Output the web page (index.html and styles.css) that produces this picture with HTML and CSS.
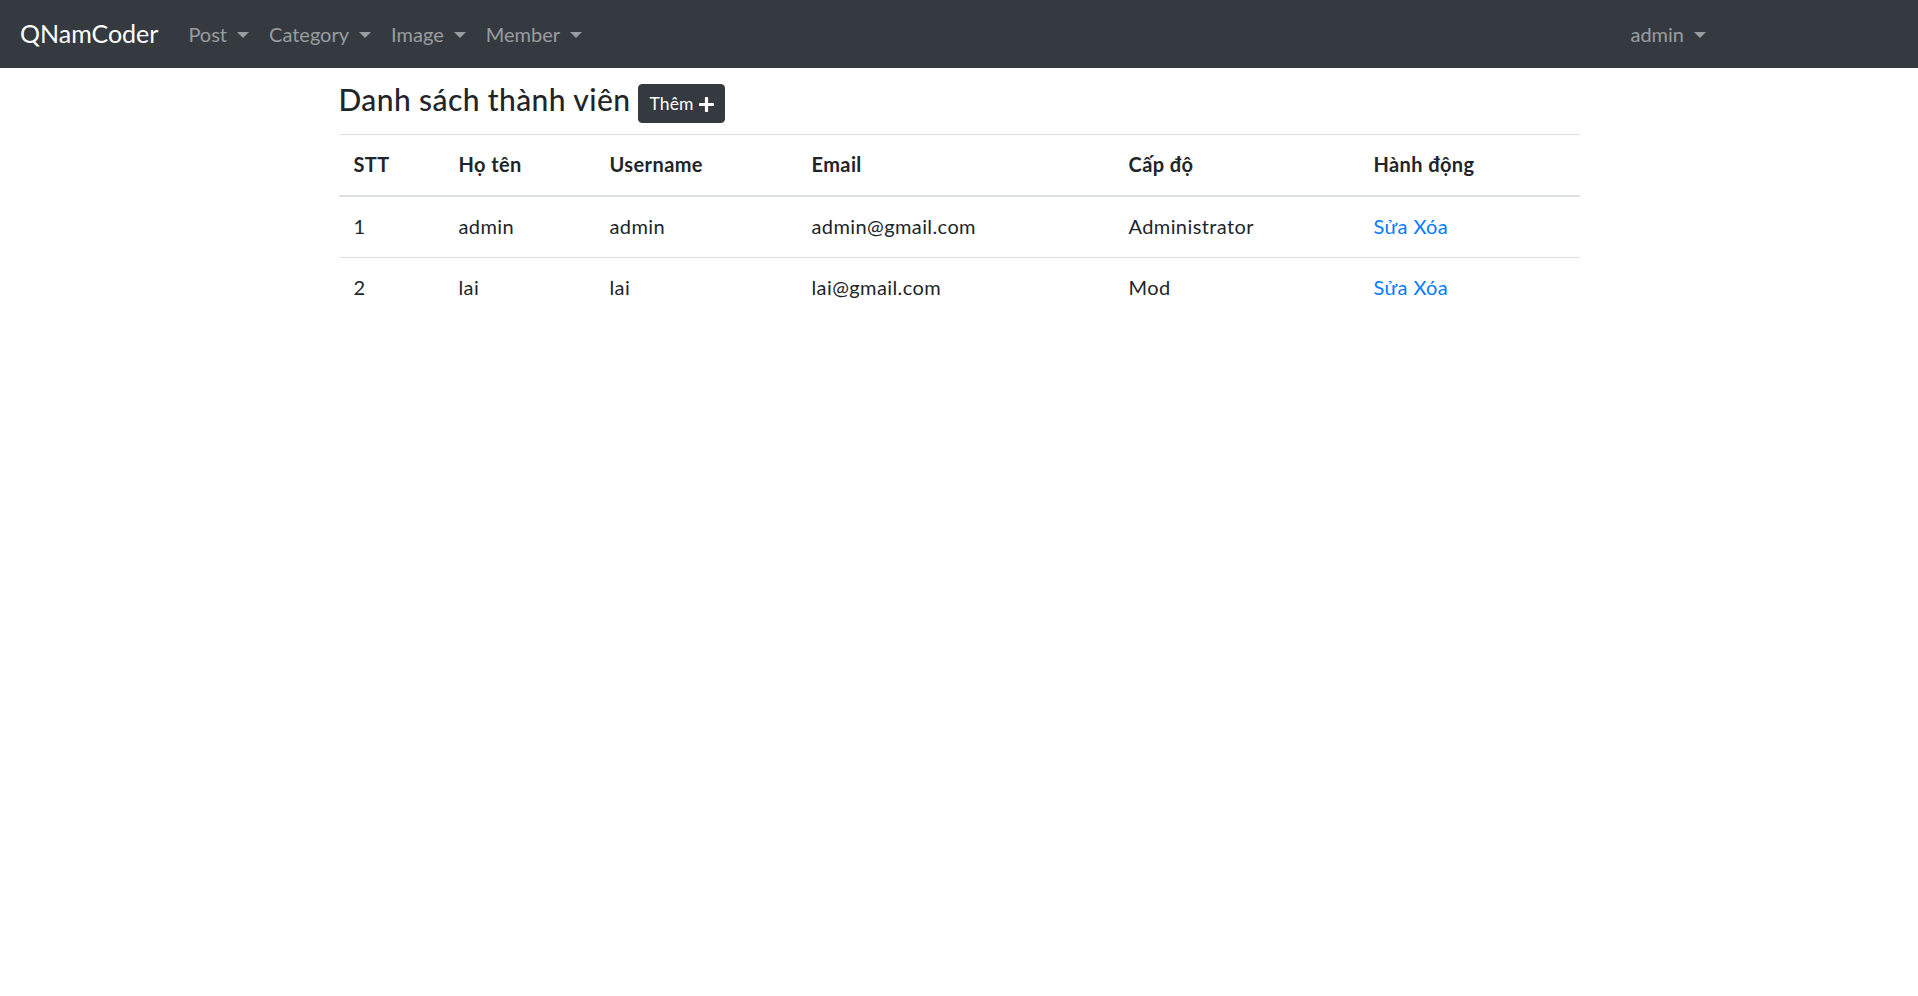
FILE: index.html
```html
<!DOCTYPE html>
<html lang="vi">
<head>
<meta charset="utf-8">
<title>Danh sách thành viên</title>
<link rel="stylesheet" href="styles.css">
</head>
<body>
<nav class="navbar">
  <a class="brand" href="#">QNamCoder</a>
  <ul class="nav">
    <li><a class="nav-link dropdown" href="#">Post</a></li>
    <li><a class="nav-link dropdown" href="#">Category</a></li>
    <li><a class="nav-link dropdown" href="#">Image</a></li>
    <li><a class="nav-link dropdown" href="#">Member</a></li>
  </ul>
  <ul class="nav nav-right">
    <li><a class="nav-link dropdown" href="#">admin</a></li>
  </ul>
</nav>
<main class="container">
  <div class="title-row">
    <h4 class="title">Danh sách thành viên</h4>
    <a class="btn" href="#">Thêm <svg class="plus" viewBox="0 32 448 448" width="15" height="15"><path fill="#fff" d="M416 208H272V64c0-17.67-14.33-32-32-32h-32c-17.67 0-32 14.33-32 32v144H32c-17.67 0-32 14.33-32 32v32c0 17.67 14.33 32 32 32h144v144c0 17.67 14.33 32 32 32h32c17.67 0 32-14.33 32-32V304h144c17.67 0 32-14.33 32-32v-32c0-17.67-14.33-32-32-32z"/></svg></a>
  </div>
  <table class="table">
    <thead>
      <tr>
        <th class="c-stt">STT</th>
        <th class="c-name">Họ tên</th>
        <th class="c-user">Username</th>
        <th class="c-email">Email</th>
        <th class="c-level">Cấp độ</th>
        <th class="c-action">Hành động</th>
      </tr>
    </thead>
    <tbody>
      <tr>
        <td>1</td>
        <td>admin</td>
        <td>admin</td>
        <td>admin@gmail.com</td>
        <td>Administrator</td>
        <td><a href="#">Sửa</a> <a href="#">Xóa</a></td>
      </tr>
      <tr>
        <td>2</td>
        <td>lai</td>
        <td>lai</td>
        <td>lai@gmail.com</td>
        <td>Mod</td>
        <td><a href="#">Sửa</a> <a href="#">Xóa</a></td>
      </tr>
    </tbody>
  </table>
</main>
</body>
</html>
```

FILE: styles.css
```css
* { box-sizing: border-box; }

body {
  margin: 0;
  font-family: Lato, "Noto Sans", sans-serif;
  font-size: 20px;
  line-height: 1.5;
  letter-spacing: 0.02em;
  color: #212529;
  background: #fff;
}

a { text-decoration: none; }

.navbar {
  display: flex;
  align-items: center;
  height: 68px;
  padding: 0 20px 1px;
  background: #343a40;
  letter-spacing: 0;
}

.brand {
  color: #fff;
  font-size: 25px;
  margin-right: 20px;
  line-height: 1.5;
}

.nav {
  display: flex;
  list-style: none;
  margin: 0;
  padding: 0;
}

.nav-right {
  margin-left: auto;
  margin-right: 182px;
}

.nav-link {
  display: block;
  padding: 0 10px;
  color: rgba(255, 255, 255, 0.5);
  font-size: 20px;
}

.dropdown::after {
  content: "";
  display: inline-block;
  margin-left: 10px;
  vertical-align: 4px;
  border-top: 6px solid;
  border-left: 6px solid transparent;
  border-right: 6px solid transparent;
}

.container {
  width: 1241px;
  margin: 0 auto;
  padding-top: 15px;
}

.title-row {
  display: flex;
  align-items: center;
  gap: 8px;
  margin-bottom: 11px;
}

.title {
  margin: -8px 0 0;
  font-size: 30px;
  font-weight: 500;
  line-height: 1.2;
}

.btn {
  display: inline-flex;
  align-items: center;
  gap: 5px;
  height: 39px;
  padding: 1px 10px 0;
  font-size: 17.5px;
  letter-spacing: 0.01em;
  color: #fff;
  background: #343a40;
  border: 1px solid #343a40;
  border-radius: 4px;
  margin-top: 1px;
}

.plus { display: block; }

.table {
  width: 100%;
  border-collapse: collapse;
}

.table th,
.table td {
  padding: 14px 15px 16px;
  text-align: left;
  vertical-align: top;
  border-top: 1px solid #dee2e6;
}

.table thead th {
  border-bottom: 2px solid #dee2e6;
  font-weight: 700;
}

.table td a { color: #007bff; }

.c-stt { width: 105px; }
.c-name { width: 151px; }
.c-user { width: 202px; }
.c-email { width: 317px; }
.c-level { width: 245px; }
.c-action { width: 221px; }
```
